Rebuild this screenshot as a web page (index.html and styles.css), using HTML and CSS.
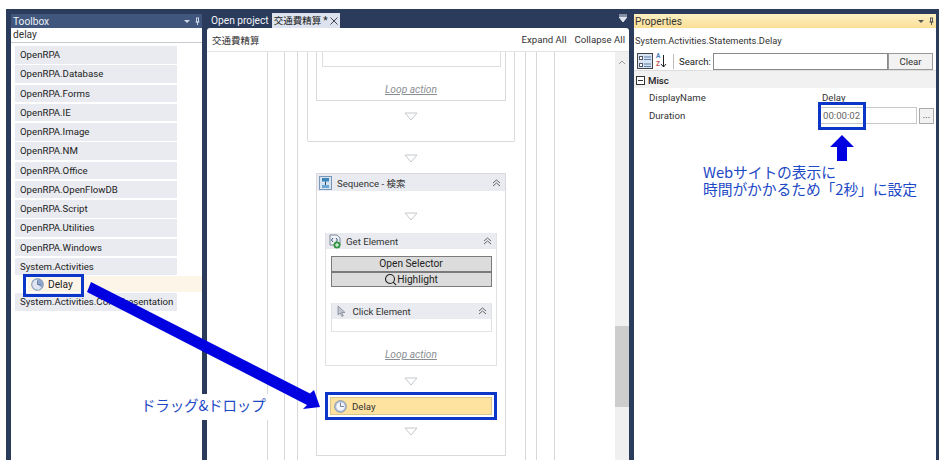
FILE: index.html
```html
<!DOCTYPE html>
<html lang="ja">
<head>
<meta charset="utf-8">
<title>OpenRPA</title>
<link rel="stylesheet" href="styles.css">
</head>
<body>
<div class="app">
  <section class="toolbox">
    <header class="title title-dark"><span>Toolbox</span><span class="pin"><svg width="16" height="9" viewBox="0 0 16 9"><path d="M0 3h6L3 6z" fill="#cfd8e8"/><path d="M12 1h3M12.500 1v4h2V1M11.500 5h4M13.500 5v3" stroke="#cfd8e8" fill="none"/></svg></span></header>
    <div class="search">delay</div>
    <ul class="groups">
      <li class="group">OpenRPA</li>
      <li class="group">OpenRPA.Database</li>
      <li class="group">OpenRPA.Forms</li>
      <li class="group">OpenRPA.IE</li>
      <li class="group">OpenRPA.Image</li>
      <li class="group">OpenRPA.NM</li>
      <li class="group">OpenRPA.Office</li>
      <li class="group">OpenRPA.OpenFlowDB</li>
      <li class="group">OpenRPA.Script</li>
      <li class="group">OpenRPA.Utilities</li>
      <li class="group">OpenRPA.Windows</li>
      <li class="group">System.Activities</li>
      <li class="tool">
        <svg width="13" height="13" viewBox="0 0 13 13"><circle cx="6.500" cy="6.500" r="6" fill="#8fa6cc" stroke="#7e8ea8" stroke-width=".6"/><path d="M6.500 1.500v5l4 3A5 5 0 0 1 2 9a5 5 0 0 1 4.500-7.500z" fill="#dfe6f2"/><path d="M6.500 2.500v4h3.500" fill="none" stroke="#5f7394" stroke-width=".8"/></svg>
        <span>Delay</span>
      </li>
      <li class="group">System.Activities.Core.Presentation</li>
    </ul>
  </section>

  <section class="center">
    <nav class="tabs">
      <span class="tab">Open project</span>
      <span class="tab tab-active"><span class="cjk">交通費精算</span>*<svg width="8" height="8" viewBox="0 0 8 8"><path d="M.5.500l7 7M7.500.500l-7 7" stroke="#445" fill="none"/></svg></span>
      <span class="tabs-menu"><svg width="8" height="9" viewBox="0 0 8 9"><path d="M0 1h8M0 3h8L4 8z" stroke="#dfe5ee" fill="#dfe5ee" stroke-width="1"/></svg></span>
    </nav>
    <div class="doc">
      <div class="doc-head">
        <span class="cjk">交通費精算</span>
        <span class="doc-actions"><span>Expand All</span><span>Collapse All</span></span>
      </div>
      <div class="canvas-wrap">
        <div class="canvas">
          <div class="rail rail-1"><div class="rail rail-2"><div class="rail rail-3">
            <div class="flow">
              <div class="loop-outer">
                <div class="loop-mid">
                  <div class="loop-in"></div>
                  <a class="loop-link link-top">Loop action</a>
                </div>
                <svg class="tri tri-a" width="14" height="9" viewBox="0 0 14 9"><path d="M1 1h12L7 8z" fill="#fff" stroke="#c4c8cc"/></svg>
              </div>
              <svg class="tri tri-b" width="14" height="9" viewBox="0 0 14 9"><path d="M1 1h12L7 8z" fill="#fff" stroke="#c4c8cc"/></svg>
              <div class="seq">
                <div class="act-head seq-head">
                  <svg width="13" height="14" viewBox="0 0 13 14"><rect x=".5" y=".5" width="12" height="13" fill="#d5e3f2" stroke="#7b97b8"/><rect x="3" y="2" width="7" height="3.500" fill="#3e86b8"/><rect x="3" y="9" width="7" height="3" fill="#6aa8d2"/><path d="M6.500 5.500V9" stroke="#2b4a6a"/></svg>
                  <span class="act-name">Sequence - <span class="cjk">検索</span></span>
                  <svg class="chev" width="9" height="8" viewBox="0 0 9 8"><path d="M1 4l3.500-3L8 4M1 7l3.500-3L8 7" fill="none" stroke="#555" stroke-width=".9"/></svg>
                </div>
                <svg class="tri tri-c" width="14" height="9" viewBox="0 0 14 9"><path d="M1 1h12L7 8z" fill="#fff" stroke="#c4c8cc"/></svg>
                <div class="getel">
                  <div class="act-head get-head">
                    <svg width="12" height="15" viewBox="0 0 12 15"><path d="M1 1h7l3 3v7H1z" fill="#eef1f6" stroke="#7a8796"/><path d="M4 4L2.500 6 4 8M7 4l1.500 2L7 8" stroke="#33527a" fill="none"/><circle cx="8" cy="11" r="3.500" fill="#2f9440"/><path d="M8 9v4M6 11h4" stroke="#fff"/></svg>
                    <span class="act-name">Get Element</span>
                    <svg class="chev" width="9" height="8" viewBox="0 0 9 8"><path d="M1 4l3.500-3L8 4M1 7l3.500-3L8 7" fill="none" stroke="#555" stroke-width=".9"/></svg>
                  </div>
                  <div class="btn-stack">
                    <div class="sel-btn">Open Selector</div>
                    <div class="sel-btn"><svg width="13" height="13" viewBox="0 0 13 13"><circle cx="6" cy="6" r="4.500" fill="none" stroke="#222" stroke-width="1.100"/><path d="M9.200 9.200l3 3" stroke="#222" stroke-width="1.100"/></svg>Highlight</div>
                  </div>
                  <div class="click">
                    <div class="act-head click-head">
                      <svg width="9" height="12" viewBox="0 0 9 12"><path d="M1 1v9l2.300-2 1.500 3.500 1.500-.7L4.800 7.500H8z" fill="#c3c8d0" stroke="#77808c" stroke-width=".7"/></svg>
                      <span class="act-name">Click Element</span>
                      <svg class="chev" width="9" height="8" viewBox="0 0 9 8"><path d="M1 4l3.500-3L8 4M1 7l3.500-3L8 7" fill="none" stroke="#555" stroke-width=".9"/></svg>
                    </div>
                  </div>
                  <a class="loop-link link-low">Loop action</a>
                </div>
                <svg class="tri tri-d" width="14" height="9" viewBox="0 0 14 9"><path d="M1 1h12L7 8z" fill="#fff" stroke="#c4c8cc"/></svg>
                <div class="delay-mark">
                  <div class="delay-act">
                    <svg width="13" height="13" viewBox="0 0 13 13"><circle cx="6.500" cy="6.500" r="6" fill="#a9b9d4" stroke="#7e8ea8" stroke-width=".6"/><circle cx="6.500" cy="6.500" r="4.300" fill="#f4f6fa"/><path d="M6.500 2.600v3.900h3.400" fill="none" stroke="#6f7f9a"/></svg>
                    <span>Delay</span>
                  </div>
                </div>
                <svg class="tri tri-e" width="14" height="9" viewBox="0 0 14 9"><path d="M1 1h12L7 8z" fill="#fff" stroke="#c4c8cc"/></svg>
              </div>
            </div>
          </div></div></div>
        </div>
        <div class="scrollbar">
          <svg width="8" height="5" viewBox="0 0 8 5"><path d="M1 4l3-3 3 3" fill="none" stroke="#999"/></svg>
          <div class="thumb"></div>
        </div>
      </div>
    </div>
  </section>

  <section class="props">
    <header class="title title-gold"><span>Properties</span><span class="pin"><svg width="16" height="9" viewBox="0 0 16 9"><path d="M0 3h6L3 6z" fill="#555"/><path d="M12 1h3M12.500 1v4h2V1M11.500 5h4M13.500 5v3" stroke="#555" fill="none"/></svg></span></header>
    <div class="prop-type">System.Activities.Statements.Delay</div>
    <div class="prop-bar">
      <span class="ico-on"><svg width="13" height="13" viewBox="0 0 13 13"><rect x=".5" y="1.500" width="3" height="3" fill="#fff" stroke="#556"/><rect x=".5" y="8.500" width="3" height="3" fill="#fff" stroke="#556"/><path d="M5 2h7M5 4.500h7M5 9h7M5 11.500h7" stroke="#5c7fa8"/></svg></span>
      <span class="ico-az"><span class="az"><span class="az-a">A</span><span class="az-z">Z</span></span><svg width="7" height="14" viewBox="0 0 7 14"><path d="M3.500 1v12M1 10l2.500 3L6 10" stroke="#222" fill="none"/></svg></span>
      <span class="bar-sep"></span>
      <span class="search-label">Search:</span>
      <span class="prop-search"></span>
      <span class="clear">Clear</span>
    </div>
    <div class="cat"><svg width="9" height="9" viewBox="0 0 9 9"><rect x=".5" y=".5" width="8" height="8" fill="#fff" stroke="#333"/><path d="M2 4.500h5" stroke="#333"/></svg>Misc</div>
    <div class="row"><span class="key">DisplayName</span><span class="val">Delay</span></div>
    <div class="row"><span class="key">Duration</span><span class="val val-input">00:00:02</span><span class="more">...</span></div>
  </section>

  <div class="mark mark-tool"></div>
  <div class="mark mark-dur"></div>
  <p class="note note-drag">ドラッグ&amp;ドロップ</p>
  <svg class="arrows" width="946" height="473" viewBox="0 0 946 473">
    <path d="M91 282L310 393.500l4-3.500 6 17-17 2 4-4L87 292z" fill="#0000e0"/>
    <path d="M842 135l12 12h-7v14h-10v-14h-7z" fill="#0000e0"/>
  </svg>
  <p class="note note-time"><span class="note-line">Webサイトの表示に</span><span class="note-line">時間がかかるため「2秒」に設定</span></p>
</div>
</body>
</html>
```

FILE: styles.css
```css
* { box-sizing: border-box; }
html, body { margin: 0; padding: 0; background: #fff; }
body { width: 946px; height: 473px; overflow: hidden; font-family: Roboto, "Noto Sans CJK JP", sans-serif; font-size: 9.650px; color: #222; }
ul { margin: 0; padding: 0; list-style: none; }
.cjk { font-family: "Noto Sans CJK JP", sans-serif; font-size: 9.500px; }

.app { position: relative; width: 946px; height: 473px; padding: 9px 6px 13px 6px; }
.app > section { float: left; height: 451px; }

.toolbox { width: 199px; border-left: 5px solid #2a3b5c; border-right: 3px solid #2a3b5c; border-top: 5px solid #2a3b5c; background: #fff; display: flex; flex-direction: column; }
.title { height: 14px; flex: none; display: flex; justify-content: space-between; align-items: center; padding: 0 2px 0 1px; }
.title-dark { background: #40567c; color: #eef2f8; padding-left: 2px; font-size: 10.200px; }
.title-gold { background: linear-gradient(#fdf0c4, #fbdf96); color: #333; font-size: 10.200px; }
.pin { display: flex; }
.search { height: 15px; line-height: 14px; padding-left: 2px; border-bottom: 1px solid #c8ccd2; color: #333; flex: none; font-size: 10.200px; }
.groups { padding: 3px 0 0 4px; }
.group { width: 162px; height: 17.500px; margin-bottom: 1.750px; background: #e9ebf0; padding-left: 5px; line-height: 17px; color: #222; }
.tool { height: 16px; margin: -1px 0 1px 13px; background: #fdf6e8; display: flex; align-items: center; gap: 4px; padding-left: 3px; font-size: 10.200px; }

.center { width: 427px; background: #2a3b5c; display: flex; flex-direction: column; }
.tabs { height: 19px; flex: none; display: flex; align-items: flex-end; padding-left: 4px; position: relative; }
.tab { height: 15px; line-height: 15px; padding: 0 2px; color: #f1f4f8; font-size: 10.200px; }
.tab-active { background: #dce3ee; color: #222; margin-left: 1px; display: flex; align-items: center; gap: 2px; }
.tabs-menu { margin-left: auto; margin-right: 5px; align-self: center; display: flex; }
.doc { flex: 1; min-height: 0; margin: 0 3px 0 2px; background: #fff; border-radius: 3px 3px 0 0; display: flex; flex-direction: column; }
.doc-head { height: 24px; flex: none; border-bottom: 1px solid #e2e4e8; padding: 0 4px 0 5px; display: flex; justify-content: space-between; align-items: center; color: #333; }
.doc-actions { display: flex; gap: 8px; }
.canvas-wrap { flex: 1; min-height: 0; display: flex; }
.canvas { flex: 1; min-width: 0; overflow: hidden; }
.scrollbar { width: 14px; flex: none; background: #f0f0f0; display: flex; flex-direction: column; align-items: center; padding-top: 8px; }
.thumb { width: 14px; height: 81px; margin-top: 261px; background: #cdcdcd; }

.rail { height: 100%; border-left: 1px solid #d6d8dc; border-right: 1px solid #d6d8dc; }
.rail-1 { margin-left: 60px; width: 288px; padding: 0 17px 0 16px; }
.rail-2 { padding: 0 10px 0 12px; }
.flow { display: flex; flex-direction: column; align-items: center; margin-right: 1px; }
.loop-outer { width: 208px; height: 90px; border: 1px solid #d8dade; border-top: 0; border-radius: 0 0 2px 2px; display: flex; flex-direction: column; align-items: center; flex: none; }
.loop-mid { width: 190px; height: 49px; border: 1px solid #d8dade; border-top: 0; display: flex; flex-direction: column; align-items: center; flex: none; }
.loop-in { width: 179px; height: 15px; border: 1px solid #dcdee2; border-top: 0; flex: none; }
.loop-link { font-style: italic; text-decoration: underline; color: #8a8d92; line-height: 12px; display: block; font-size: 10.200px; }
.link-top { margin-top: 17px; }
.tri { display: block; flex: none; }
.tri-a { margin-top: 11px; }
.tri-b { margin-top: 12px; }
.seq { width: 190px; margin-top: 10px; height: 283px; border: 1px solid #d8dade; display: flex; flex-direction: column; align-items: center; flex: none; }
.act-head { width: 100%; background: #e9ebf0; display: flex; align-items: center; color: #333; flex: none; }
.act-name { flex: 1; }
.chev { flex: none; }
.seq-head { height: 17px; padding: 0 4px 0 2px; gap: 5px; margin-bottom: 1px; }
.tri-c { margin-top: 20px; }
.getel { width: 172px; height: 133px; margin-top: 12px; border: 1px solid #e0e2e6; border-top: 0; display: flex; flex-direction: column; align-items: center; flex: none; }
.get-head { height: 16px; padding: 0 4px 0 3px; gap: 5px; }
.btn-stack { width: 161px; margin-top: 7px; display: flex; flex-direction: column; flex: none; font-size: 10.200px; }
.sel-btn { height: 15.500px; background: #dcdcdc; border: 1px solid #7a7a7a; text-align: center; line-height: 13px; color: #222; display: flex; justify-content: center; align-items: center; }
.click { width: 161px; height: 29px; margin-top: 16px; border: 1px solid #e0e2e6; border-top: 0; flex: none; }
.click-head { height: 16px; padding: 0 4px 0 5px; gap: 7px; }
.link-low { margin-top: 17px; }
.tri-d { margin-top: 11px; }
.delay-mark { width: 172px; height: 28px; margin-top: 6px; border: 3px solid #0c36c8; display: flex; align-items: center; justify-content: center; flex: none; }
.delay-act { width: 162px; height: 18px; background: #fde2a0; border: 1px solid #d9c58e; display: flex; align-items: center; gap: 5px; padding-left: 3px; color: #333; }
.tri-e { margin-top: 7px; }

.props { width: 307px; background: #fff; border-top: 5px solid #2a3b5c; border-left: 2px solid #2a3b5c; border-right: 3px solid #2a3b5c; }
.prop-type { height: 18px; padding: 3px 0 0 1px; line-height: 14px; color: #333; margin-top: 3px; font-size: 9.300px; }
.prop-bar { height: 19px; display: flex; align-items: center; padding-left: 3px; margin-top: 3px; border-bottom: 1px solid #ddd; }
.ico-on { width: 16px; height: 16px; border: 1px solid #444; background: #d6e4f4; display: flex; align-items: center; justify-content: center; flex: none; }
.ico-az { margin-left: 3px; display: flex; align-items: center; width: 13px; flex: none; }
.az { display: flex; flex-direction: column; font-size: 6.500px; line-height: 7.600px; font-weight: 700; }
.az-a { color: #4f7fbf; }
.az-z { color: #b9534d; }
.bar-sep { width: 1px; height: 15px; background: #bbb; margin: 0 5px 0 4px; flex: none; }
.search-label { width: 34px; flex: none; }
.prop-search { width: 175px; height: 17px; border: 1px solid #8a8a8a; background: #fff; flex: none; }
.clear { width: 45px; height: 17px; border: 1px solid #9a9a9a; background: #f2f2f2; text-align: center; line-height: 15px; color: #333; flex: none; }
.cat { height: 17px; background: #f1f1f1; display: flex; align-items: center; gap: 3px; padding: 2px 0 0 2px; color: #222; font-weight: 500; }
.row { height: 18.500px; display: flex; align-items: center; }
.key { width: 184px; padding-left: 15px; color: #333; }
.val { padding-left: 4px; color: #333; }
.val-input { width: 99px; height: 17px; border: 1px solid #c8c8c8; line-height: 15px; padding-left: 4px; color: #666; }
.more { width: 15px; height: 16px; margin-left: 2px; border: 1px solid #aaa; background: #f2f2f2; text-align: center; line-height: 12px; }

.mark { position: absolute; border: 3px solid #0c36c8; }
.mark-tool { left: 23px; top: 274px; width: 61px; height: 23px; }
.mark-dur { left: 818px; top: 102px; width: 48px; height: 28px; }
.arrows { position: absolute; left: 0; top: 0; pointer-events: none; }
.note { position: absolute; margin: 0; color: #1d49c4; font-family: "Noto Sans CJK JP", sans-serif; }
.note-drag { left: 136px; top: 394px; width: 134px; height: 26px; padding-left: 5px; background: #fff; font-size: 14.500px; line-height: 22px; letter-spacing: -.15px; white-space: nowrap; }
.note-time { left: 703px; top: 163px; font-size: 14.800px; letter-spacing: -.1px; white-space: nowrap; }
.note-line { display: block; height: 17px; line-height: 17px; }
```
